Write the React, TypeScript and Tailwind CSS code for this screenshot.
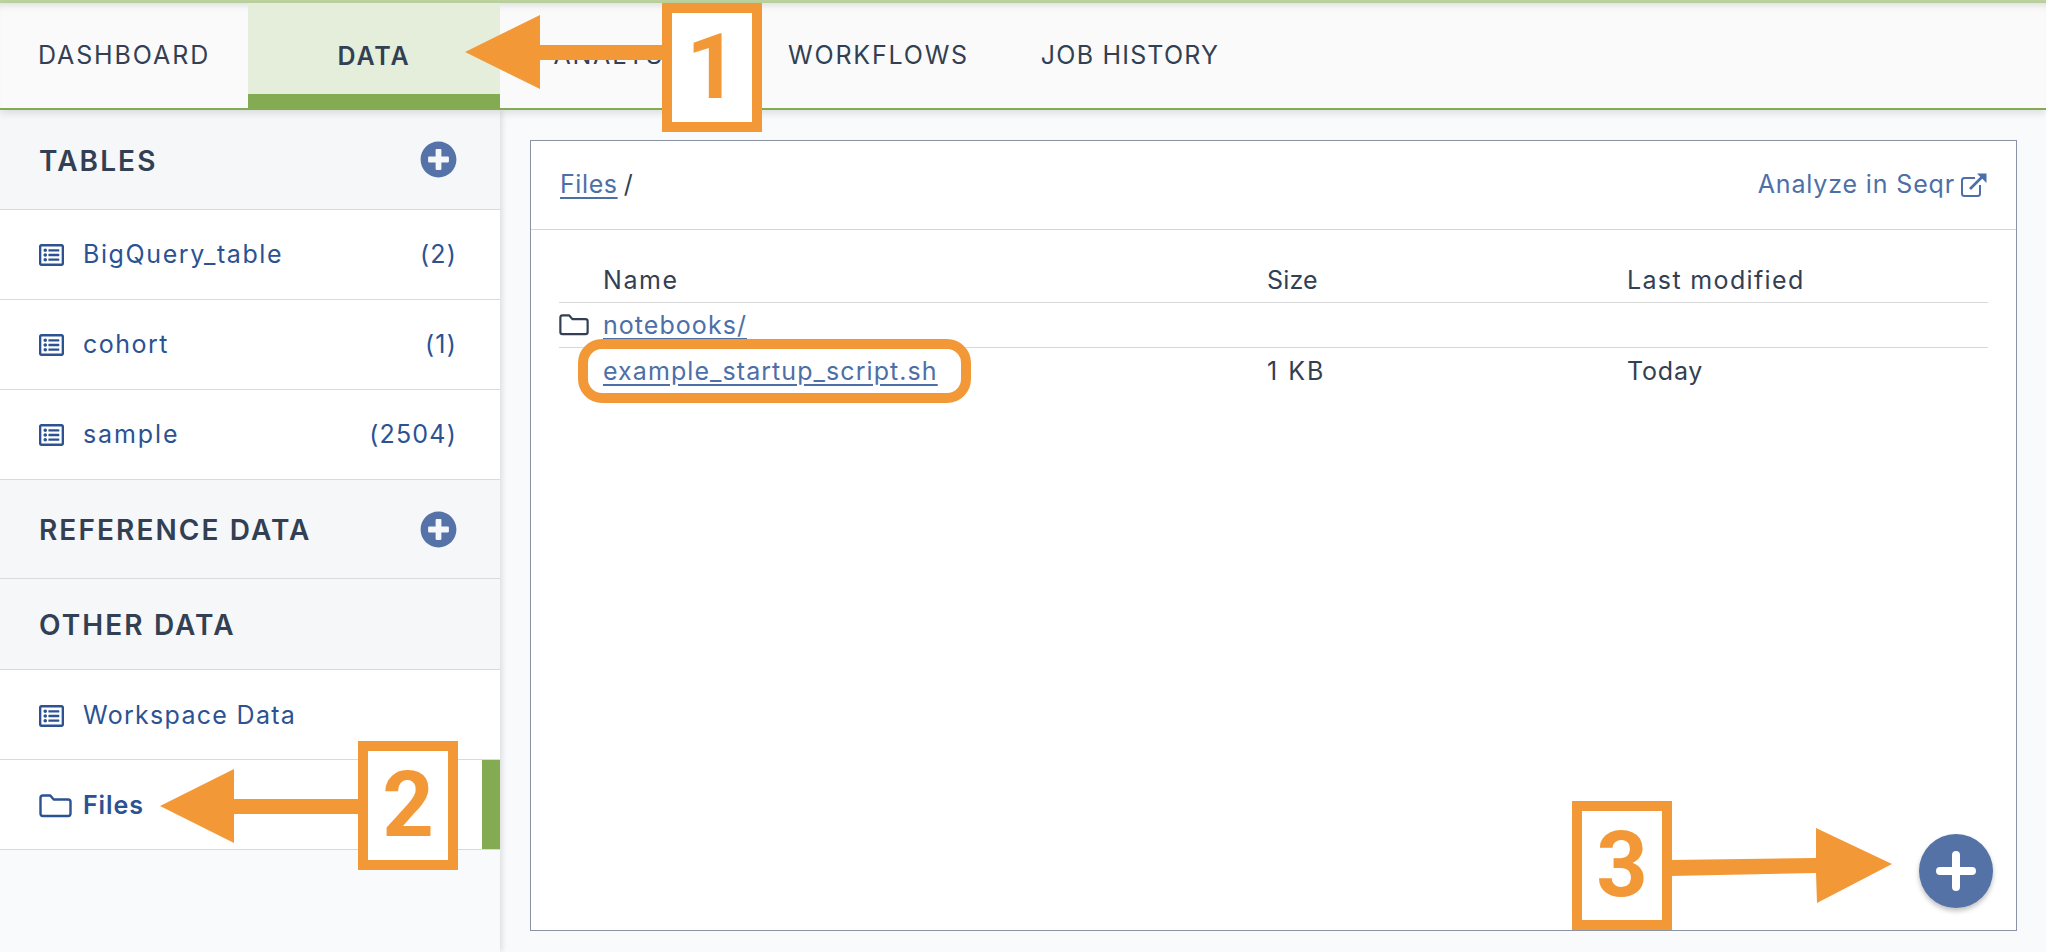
import { FaPlusCircle, FaRegListAlt } from "react-icons/fa";

const tabs = [
  { label: "DASHBOARD", width: "w-[248px]", tracking: "tracking-[1.9px]" },
  { label: "DATA", width: "w-[252px]", tracking: "tracking-[1.8px]", active: true },
  { label: "ANALYSES", width: "w-[252px]", tracking: "tracking-[1.8px]" },
  { label: "WORKFLOWS", width: "w-[253px]", tracking: "tracking-[1.8px]" },
  { label: "JOB HISTORY", width: "w-[250px]", tracking: "tracking-[1.2px]" },
];

const FolderIcon = ({ className }: { className: string }) => (
  <svg viewBox="0 0 33 24" fill="none" stroke="currentColor" strokeWidth="2.4" strokeLinejoin="round" className={className}>
    <path d="M1.5 4c0-1.4 1-2.5 2.4-2.5h7.4l3.4 4h14.4c1.4 0 2.4 1 2.4 2.4v11.7c0 1.4-1 2.4-2.4 2.4H3.9c-1.4 0-2.4-1-2.4-2.4z" />
  </svg>
);

const ExternalIcon = () => (
  <svg viewBox="0 0 26 25" fill="none" stroke="currentColor" className="ml-[6px] h-[25px] w-[26px]">
    <path d="M14 5H3.5C2.1 5 1 6.100 1 7.500v13C1 21.900 2.100 23 3.500 23h13c1.400 0 2.500-1.100 2.500-2.500V12" strokeWidth="2" />
    <path d="M9 16 23 2" strokeWidth="2.600" />
    <path d="M16 0.500h9.500V10z" fill="currentColor" stroke="none" />
  </svg>
);

const SectionHeader = ({ title, add, height }: { title: string; add?: boolean; height: string }) => (
  <div className={`flex items-center justify-between border-b border-[#d9dadc] bg-[#f6f7f9] pr-[43px] pl-[39px] text-[28px] font-semibold tracking-[2.1px] text-[#333f52] ${height}`}>
    <span className="pt-[2px]">{title}</span>
    {add && <FaPlusCircle className="h-[37px] w-[37px] text-[#5573a8]" />}
  </div>
);

const TableRow = ({ name, count, tracking, offset }: { name: string; count?: string; tracking: string; offset?: string }) => (
  <div className={`flex h-[90px] items-center justify-between border-b border-[#d9dadc] bg-white pr-[43px] pl-[39px] text-[25px] text-[#2c5292] ${offset ?? ""}`}>
    <div className="flex items-center">
      <FaRegListAlt className="mr-[19px] h-[26px] w-[25px]" />
      <span className={tracking}>{name}</span>
    </div>
    {count && <span className="tracking-[1.2px]">{count}</span>}
  </div>
);

const Sidebar = () => (
  <div className="z-10 w-[500px] shrink-0 shadow-[2px_0_6px_rgba(0,0,0,0.12)]">
    <SectionHeader title="TABLES" add height="h-[100px]" />
    <TableRow name="BigQuery_table" count="(2)" tracking="tracking-[1.6px]" />
    <TableRow name="cohort" count="(1)" tracking="tracking-[1.5px]" />
    <TableRow name="sample" count="(2504)" tracking="tracking-[1.9px]" />
    <SectionHeader title="REFERENCE DATA" add height="h-[99px]" />
    <SectionHeader title="OTHER DATA" height="h-[91px]" />
    <TableRow name="Workspace Data" tracking="tracking-[1.3px]" offset="pt-[2px]" />
    <div className="flex h-[90px] items-center justify-between border-b border-[#d9dadc] bg-white pl-[39px] text-[25px] font-semibold text-[#2c5292]">
      <div className="flex items-center pt-[2px]">
        <FolderIcon className="mr-[11px] h-[24px] w-[33px]" />
        <span className="tracking-[0.9px]">Files</span>
      </div>
      <div className="h-full w-[18px] bg-[#82ab52]" />
    </div>
  </div>
);

const FilesPanel = () => (
  <div className="relative h-full border border-[#8a93a6] bg-white text-[25px] text-[#333f52]">
    <div className="flex h-[89px] items-center justify-between border-b border-[#d3d4d6] pr-[29px] pl-[29px]">
      <div>
        <span className="tracking-[0.6px] text-[#4d6fa8] underline underline-offset-[4px]">Files</span>
        <span className="ml-[6px]">/</span>
      </div>
      <div className="flex items-center text-[#4d6fa8]">
        <span className="tracking-[0.85px]">Analyze in Seqr</span>
        <ExternalIcon />
      </div>
    </div>
    <div className="mr-[28px] ml-[28px]">
      <div className="grid h-[73px] grid-cols-[44px_664px_360px_1fr] items-end border-b border-[#d8d8d8] pb-[3px]">
        <span />
        <span className="tracking-[1.6px]">Name</span>
        <span className="tracking-[0.15px]">Size</span>
        <span className="tracking-[1.35px]">Last modified</span>
      </div>
      <div className="grid h-[45px] grid-cols-[44px_664px_360px_1fr] items-center border-b border-[#d8d8d8]">
        <FolderIcon className="h-[24px] w-[30px]" />
        <span className="pt-[1px] tracking-[1.05px] text-[#4d6fa8] underline underline-offset-[4px]">notebooks/</span>
      </div>
      <div className="grid h-[48px] grid-cols-[44px_664px_360px_1fr] items-center">
        <span />
        <span className="tracking-[1.07px] text-[#4d6fa8] underline underline-offset-[4px]">example_startup_script.sh</span>
        <span className="tracking-[2px]">1 KB</span>
        <span className="tracking-[0.8px]">Today</span>
      </div>
    </div>
    <div className="absolute right-[23px] bottom-[22px] flex h-[74px] w-[74px] items-center justify-center rounded-full bg-[#5472a6] shadow-[0_3px_5px_rgba(0,0,0,0.25)]">
      <svg viewBox="0 0 40 40" className="h-[40px] w-[40px]" stroke="white" strokeWidth="8" strokeLinecap="round">
        <path d="M20 4v32M4 20h32" />
      </svg>
    </div>
  </div>
);

const NumberBox = ({ digit, className }: { digit: string; className: string }) => (
  <div className={`absolute flex h-[129px] w-[100px] items-center justify-center border-[10px] border-[#f39837] bg-white font-['Roboto',sans-serif] text-[90px] font-bold text-[#f39837] ${className}`}>
    {digit}
  </div>
);

// callouts drawn over the screenshot
const Annotations = () => (
  <div className="absolute top-0 left-0 z-30">
    <svg viewBox="0 0 2046 952" className="absolute top-0 left-0 h-[952px] w-[2046px]" fill="#f39837">
      <path d="M465 52 540 15v30h125v15H540v29z" />
      <path d="M160 806 234 769v30h127v15H234v29z" />
      <path d="M1670 860 1816 858v-30l76 36-75 39-1-30-146 3z" />
    </svg>
    <NumberBox digit="1" className="top-[3px] left-[662px]" />
    <NumberBox digit="2" className="top-[741px] left-[358px]" />
    <NumberBox digit="3" className="top-[801px] left-[1572px]" />
    <div className="absolute top-[339px] left-[578px] h-[64px] w-[393px] rounded-[24px] border-[10px] border-[#f39837]" />
  </div>
);

const App = () => {
  return (
    <div className="relative flex h-[952px] w-[2046px] flex-col overflow-hidden bg-[#f9fafc] font-['Inter',sans-serif]">
      <div className="h-[3px] bg-[#bdd3a0]" />
      <div className="z-20 flex h-[107px] shrink-0 border-b-[2px] border-[#82ab52] bg-[#fafafa] shadow-[0_3px_8px_rgba(0,0,0,0.12),inset_0_7px_6px_-4px_rgba(0,0,0,0.1)]">
        {tabs.map((tab) => (
          <div
            key={tab.label}
            className={`flex items-center justify-center text-[25px] text-[#333f52] ${tab.width} ${tab.tracking} ${
              tab.active ? "border-b-[14px] border-[#82ab52] bg-[#e5eedb] pt-[16px] font-semibold" : ""
            }`}
          >
            {tab.label}
          </div>
        ))}
      </div>
      <div className="flex flex-1">
        <Sidebar />
        <div className="flex-1 pt-[30px] pr-[29px] pb-[21px] pl-[30px]">
          <FilesPanel />
        </div>
      </div>
      <Annotations />
    </div>
  );
};

export default App;
